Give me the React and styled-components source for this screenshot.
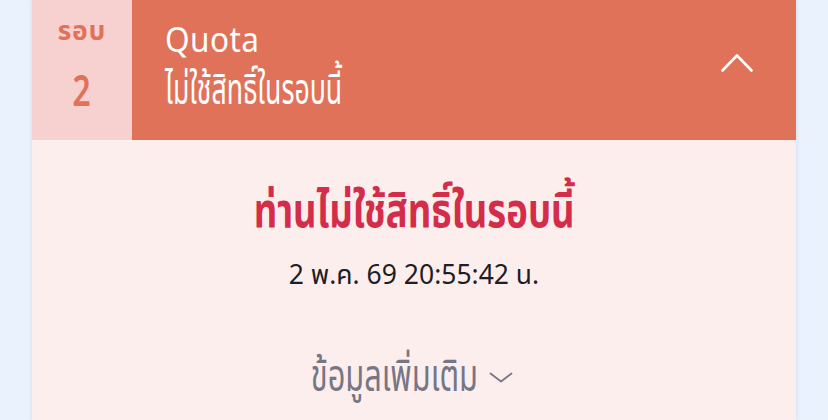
import React from 'react';
import styled, { createGlobalStyle } from 'styled-components';

const GlobalStyle = createGlobalStyle`
    html, body {
        margin: 0;
        padding: 0;
        background: #eaf2fd;
    }
    body {
        font-family: "Noto Sans", "Noto Sans Thai", "Liberation Sans", sans-serif;
    }
`

const Page = styled.main`
    display: flex;
    justify-content: center;
    width: 828px;
    height: 420px;
    overflow: hidden;
`

const Card = styled.section`
    display: flex;
    flex-direction: column;
    width: 764px;
    box-shadow: 0 0 4px rgba(120, 140, 170, .25);
`

const Header = styled.div`
    display: flex;
    height: 140px;
`

// narrow the glyphs so the text sits like a condensed face
const Squeeze = styled.span`
    display: inline-block;
    white-space: nowrap;
    transform: scaleX(${p => p.$x});
    transform-origin: ${p => p.$origin || 'center'};
`

const RoundBox = styled.div`
    display: flex;
    flex-direction: column;
    align-items: center;
    width: 100px;
    padding-top: 12px;
    background-color: #f7d0d0;
    color: #e07259;
`

const RoundLabel = styled.div`
    font-size: 26px;
    font-weight: 700;
    line-height: 36px;
    letter-spacing: 1px;
`

const RoundNumber = styled.div`
    margin-top: 17px;
    font-size: 44px;
    font-weight: 600;
    line-height: 48px;
`

const HeaderMain = styled.div`
    flex: 1;
    display: flex;
    align-items: center;
    padding: 0 43px 0 33px;
    background-color: #e07259;
    color: #ffffff;
`

const HeaderText = styled.div`
    flex: 1;
    display: flex;
    flex-direction: column;
    align-self: flex-start;
    padding-top: 19px;
`

const Title = styled.div`
    font-size: 35px;
    line-height: 40px;
    letter-spacing: 0.5px;
`

const Subtitle = styled.div`
    margin-top: 3px;
    font-size: 43px;
    line-height: 52px;
`

const Body = styled.div`
    flex: 1;
    display: flex;
    flex-direction: column;
    align-items: center;
    padding-top: 39px;
    background-color: #fdeeee;
`

const Status = styled.div`
    font-size: 48px;
    font-weight: 700;
    line-height: 60px;
    color: #d42d4a;
`

const DateLine = styled.div`
    margin-top: 17px;
    font-size: 26.5px;
    line-height: 36px;
    color: #1e1e24;
`

const MoreToggle = styled.div`
    display: flex;
    align-items: center;
    gap: 12px;
    margin-top: 55px;
    margin-right: 40px;
    font-size: 44px;
    line-height: 54px;
    color: #767684;
`

const Arrow = styled.svg`
    flex: none;
    margin-left: ${p => p.$shift || 0}px;
    margin-bottom: ${p => p.$lift || 0}px;
`

function Chevron({ up, w, h, color, stroke, shift, lift }) {
    return (
        <Arrow $shift={shift} $lift={lift} width={w} height={h} viewBox={`0 0 ${w} ${h}`} fill="none">
            <path
                d={up
                    ? `M1.5 ${h - 1.5} L${w / 2} 1.5 L${w - 1.5} ${h - 1.5}`
                    : `M1.5 1.5 L${w / 2} ${h - 1.5} L${w - 1.5} 1.5`}
                stroke={color}
                strokeWidth={stroke}
                strokeLinecap="round"
                strokeLinejoin="round"
            />
        </Arrow>
    )
}

export default function App() {
    return (
        <Page>
            <GlobalStyle />
            <Card>
                <Header>
                    <RoundBox>
                        <RoundLabel>รอบ</RoundLabel>
                        <RoundNumber><Squeeze $x={0.72}>2</Squeeze></RoundNumber>
                    </RoundBox>
                    <HeaderMain>
                        <HeaderText>
                            <Title><Squeeze $x={0.9} $origin="left">Quota</Squeeze></Title>
                            <Subtitle><Squeeze $x={0.62} $origin="left">ไม่ใช้สิทธิ์ในรอบนี้</Squeeze></Subtitle>
                        </HeaderText>
                        <Chevron up w={32} h={18} color="#ffffff" stroke={2.6} lift={14} />
                    </HeaderMain>
                </Header>
                <Body>
                    <Status><Squeeze $x={0.76}>ท่านไม่ใช้สิทธิ์ในรอบนี้</Squeeze></Status>
                    <DateLine>2 พ.ค. 69 20:55:42 น.</DateLine>
                    <MoreToggle>
                        <Squeeze $x={0.70}>ข้อมูลเพิ่มเติม</Squeeze>
                        <Chevron w={24} h={11} color="#767684" stroke={1.8} shift={-37} lift={-6} />
                    </MoreToggle>
                </Body>
            </Card>
        </Page>
    )
}
